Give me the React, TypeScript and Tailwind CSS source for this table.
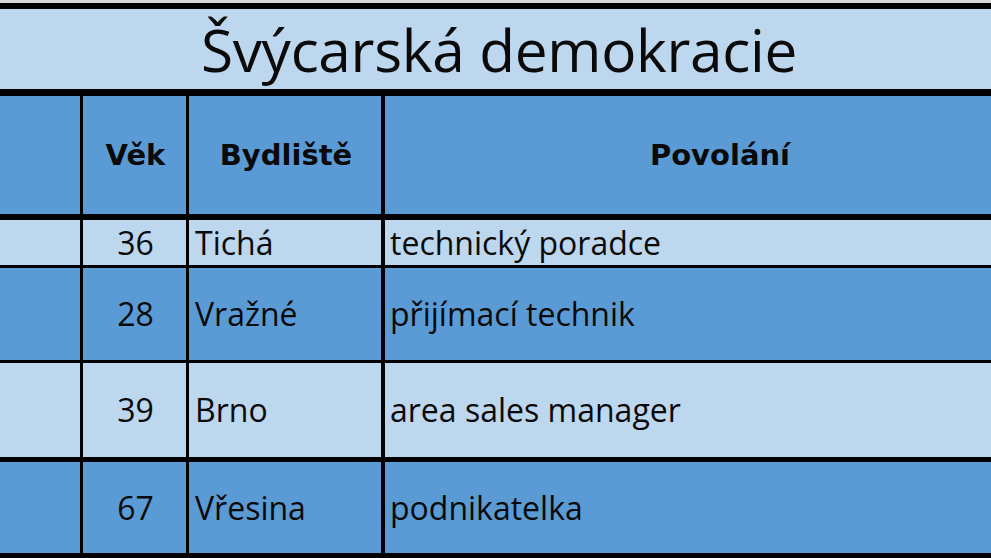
import React from "react";

const LIGHT = "bg-[#bdd7ee]";
const MID = "bg-[#5b9bd5]";

type Row = { age: string; city: string; job: string; h: string; bg: string; top: string };

const rows: Row[] = [
  { age: "36", city: "Tichá", job: "technický poradce", h: "h-[45px]", bg: LIGHT, top: "h-[6px]" },
  { age: "28", city: "Vražné", job: "přijímací technik", h: "h-[92px]", bg: MID, top: "h-[3px]" },
  { age: "39", city: "Brno", job: "area sales manager", h: "h-[94px]", bg: LIGHT, top: "h-[3px]" },
  { age: "67", city: "Vřesina", job: "podnikatelka", h: "h-[91px]", bg: MID, top: "h-[5px]" },
];

function Cells({
  bg,
  h,
  header,
  children,
}: {
  bg: string;
  h: string;
  header?: boolean;
  children: React.ReactNode[];
}) {
  return (
    <div className={`flex ${h} ${bg}`}>
      <div className="w-[83px] h-full border-r-[3px] border-black" />
      <div className="w-[106px] h-full border-r-[3px] border-black flex items-center justify-center">{children[0]}</div>
      <div
        className={
          header
            ? "w-[196px] h-full border-r-[4px] border-black flex items-center justify-center"
            : "w-[196px] h-full border-r-[4px] border-black flex items-center pl-[6px]"
        }
      >
        {children[1]}
      </div>
      <div className="flex-1 h-full flex items-center">{children[2]}</div>
    </div>
  );
}

export default function App() {
  return (
    <div
      className="w-[991px] h-[558px] overflow-hidden bg-black flex flex-col text-[#0a0a0a]"
      style={{ fontFamily: '"Open Sans", "Noto Sans", sans-serif' }}
    >
      <div className="h-[3px] bg-[#d9d9d9]" />
      <div className="h-[6px] bg-black" />
      <div className={`h-[80px] ${LIGHT} flex items-center justify-center pl-[7px]`}>
        <span className="text-[58.5px] leading-none tracking-[-0.3px]">Švýcarská demokracie</span>
      </div>
      <div className="h-[7px] bg-black" />
      <div
        className="font-bold text-[29px] leading-none"
        style={{ fontFamily: '"DejaVu Sans", "Liberation Sans", sans-serif' }}
      >
        <Cells bg={MID} h="h-[118px]" header>
          <span className="pl-[2px]">Věk</span>
          <span className="pl-[2px]">Bydliště</span>
          <span className="w-full text-center pl-[64px]">Povolání</span>
        </Cells>
      </div>
      {rows.map((r) => (
        <div key={r.age}>
          <div className={`${r.top} bg-black`} />
          <div className="text-[32px] leading-none">
            <Cells bg={r.bg} h={r.h}>
              <span className="pl-[2px]">{r.age}</span>
              <span>{r.city}</span>
              <span className="pl-[5px]">{r.job}</span>
            </Cells>
          </div>
        </div>
      ))}
      <div className="flex-1 bg-black" />
    </div>
  );
}
